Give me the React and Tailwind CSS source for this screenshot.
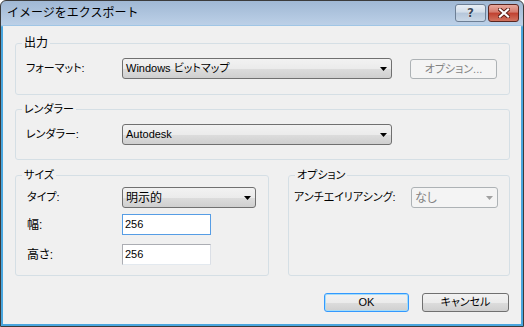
import React from 'react';

const comboBg =
  'bg-[linear-gradient(to_bottom,#f2f2f2_0%,#ebebeb_50%,#dddddd_50%,#cfcfcf_100%)]';

const Arrow = ({ disabled }) => (
  <svg width="7" height="4" viewBox="0 0 7 4" className="shrink-0">
    <polygon points="0,0 7,0 3.5,4" fill={disabled ? '#a0a0a0' : '#000000'} />
  </svg>
);

const Combo = ({ value, width, disabled, big }) => (
  <div
    className={`h-[21px] ${width} flex items-center justify-between pl-[3px] pr-[4px] rounded-[3px] border ${
      disabled ? 'border-[#adb2b5] bg-[#f4f4f4] text-[#838383]' : `border-[#707070] ${comboBg} text-black`
    }`}
  >
    <span className={`leading-none ${big ? 'text-[12px]' : ''}`}>{value}</span>
    <Arrow disabled={disabled} />
  </div>
);

const TextBox = ({ value, focused }) => (
  <div
    className={`h-[21px] w-[89px] flex items-center pl-[2px] bg-white border ${
      focused ? 'border-[#569de5]' : 'border-[#abadb3] border-b-[#e3e9ef] border-r-[#dbdfe6]'
    }`}
  >
    <span className="leading-none">{value}</span>
  </div>
);

const Group = ({ title, className, children }) => (
  <div className={`relative border border-[#d5dfe5] rounded-[3px] ${className}`}>
    <span className="absolute -top-[8px] left-[6px] px-[2px] bg-[#f0f0f0] leading-[14px]">{title}</span>
    {children}
  </div>
);

const Button = ({ children, primary, disabled, className }) => (
  <div
    className={`flex items-center justify-center rounded-[3px] border ${
      disabled
        ? 'border-[#adb2b5] bg-[#f4f4f4] text-[#838383]'
        : `${primary ? 'border-[#3399ff] shadow-[inset_0_0_0_1px_#a6dcf7]' : 'border-[#707070]'} ${comboBg} text-black`
    } ${className}`}
  >
    {children}
  </div>
);

export default function App() {
  return (
    <div className="w-[524px] h-[327px] flex flex-col rounded-t-[6px] border border-[#3b3b3b] bg-[linear-gradient(to_bottom,#a0b8d4_0px,#bcd0e7_24px,#4aa6de_26px,#4aa6de_100%)] text-[11px] font-['Liberation_Sans','Noto_Sans_CJK_JP',sans-serif] [font-feature-settings:'palt'] overflow-hidden">
      {/* title bar */}
      <div className="h-[25px] shrink-0 flex items-start justify-between">
        <span className="pl-[6px] pt-[5px] leading-[14px] text-[12px] text-black [font-feature-settings:normal]">イメージをエクスポート</span>
        <div className="flex gap-[2px] pt-[3px] pr-[4px]">
          <div className="w-[31px] h-[18px] rounded-[3px] border border-[#6d7f95] bg-[linear-gradient(to_bottom,#e8eef5_0%,#d2dde9_45%,#b5c6da_50%,#c9d7e6_100%)] flex items-center justify-center">
            <span className="font-['DejaVu_Sans',sans-serif] font-bold text-[12px] leading-none text-[#3c4a5a] [text-shadow:0_0_1px_#fff,0_0_1px_#fff]">?</span>
          </div>
          <div className="w-[31px] h-[18px] rounded-[3px] border border-[#5a2620] bg-[linear-gradient(to_bottom,#e8a99e_0%,#d47a6c_45%,#c0402f_50%,#d1735f_100%)] flex items-center justify-center">
            <svg width="12" height="10" viewBox="0 0 12 10">
              <path d="M2 1.5 L10 8.5 M10 1.5 L2 8.5" stroke="#5a1c14" strokeWidth="4" strokeLinecap="square" />
              <path d="M2 1.5 L10 8.5 M10 1.5 L2 8.5" stroke="#ffffff" strokeWidth="2.2" strokeLinecap="square" />
            </svg>
          </div>
        </div>
      </div>

      {/* client area */}
      <div className="flex-1 mx-[2px] mb-[2px] bg-[#f0f0f0] flex flex-col pt-[17px] pl-[12px] pr-[11px] text-black">
        <Group title={<span className="text-[12px]">出力</span>} className="h-[52px] flex items-start pt-[14px] pl-[10px]">
          <span className="w-[96px] h-[21px] flex items-center">フォーマット:</span>
          <Combo value="Windows ビットマップ" width="w-[270px]" />
          <Button disabled className="ml-[18px] mt-[1px] w-[87px] h-[20px]">オプション...</Button>
        </Group>

        <Group title="レンダラー" className="mt-[14px] h-[51px] flex items-start pt-[14px] pl-[10px]">
          <span className="w-[96px] h-[21px] flex items-center">レンダラー:</span>
          <Combo value="Autodesk" width="w-[270px]" />
        </Group>

        <div className="mt-[15px] flex gap-[19px]">
          <Group title="サイズ" className="w-[254px] h-[101px] flex flex-col pt-[11px] pl-[11px]">
            <div className="flex items-center">
              <span className="w-[95px]">タイプ:</span>
              <Combo value="明示的" width="w-[134px]" big />
            </div>
            <div className="flex items-center mt-[6px]">
              <span className="w-[95px] text-[12px]">幅:</span>
              <TextBox value="256" focused />
            </div>
            <div className="flex items-center mt-[9px]">
              <span className="w-[95px] text-[12px]">高さ:</span>
              <TextBox value="256" />
            </div>
          </Group>
          <Group title="オプション" className="w-[222px] h-[101px] flex items-start pt-[11px] pl-[5px]">
            <span className="w-[117px] h-[21px] flex items-center">アンチエイリアシング:</span>
            <Combo value="なし" width="w-[87px]" disabled big />
          </Group>
        </div>

        <div className="mt-[17px] flex justify-end gap-[13px] pr-[1px]">
          <Button primary className="w-[85px] h-[19px]">OK</Button>
          <Button className="w-[87px] h-[19px]">キャンセル</Button>
        </div>
      </div>
    </div>
  );
}
